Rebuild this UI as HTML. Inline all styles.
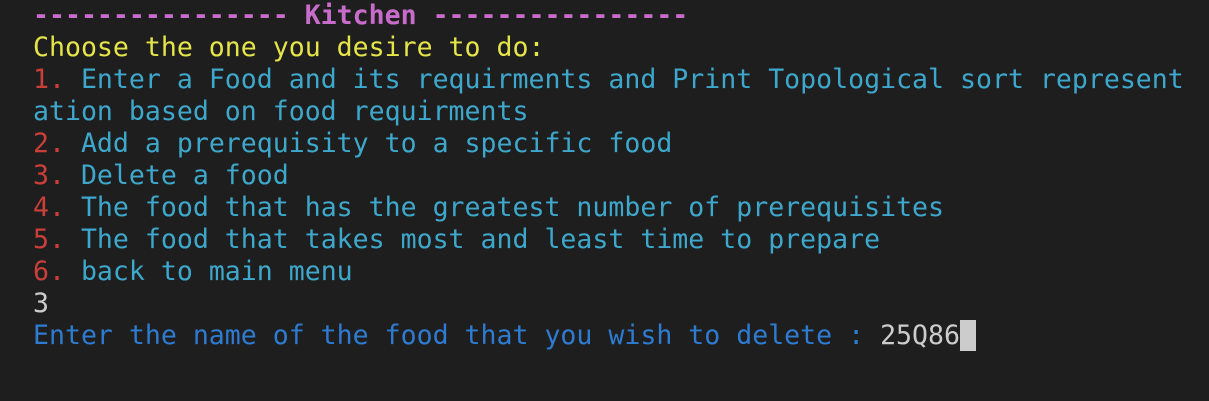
<!DOCTYPE html>
<html><head><style>
html,body{margin:0;padding:0;background:#1e1e1e;width:1209px;height:401px;overflow:hidden}
pre{margin:0;position:absolute;left:33px;top:0;font-family:"DejaVu Sans Mono","Liberation Mono",monospace;font-size:26.55px;line-height:32px;color:#cccccc;white-space:pre}
.m{color:#c86ccb;font-weight:bold}.y{color:#e5e54a}.r{color:#cb3f3a}.c{color:#3ea8cc}.b{color:#2e7bd2}
.cur{display:inline-block;width:16px;height:31px;background:#cccccc;vertical-align:top}
</style></head><body>
<pre><span class="m">---------------- Kitchen ----------------</span>
<span class="y">Choose the one you desire to do:</span>
<span class="r">1. </span><span class="c">Enter a Food and its requirments and Print Topological sort represent</span>
<span class="c">ation based on food requirments</span>
<span class="r">2. </span><span class="c">Add a prerequisity to a specific food</span>
<span class="r">3. </span><span class="c">Delete a food</span>
<span class="r">4. </span><span class="c">The food that has the greatest number of prerequisites</span>
<span class="r">5. </span><span class="c">The food that takes most and least time to prepare</span>
<span class="r">6. </span><span class="c">back to main menu</span>
3
<span class="b">Enter the name of the food that you wish to delete : </span>25Q86<span class="cur"></span></pre>
</body></html>
